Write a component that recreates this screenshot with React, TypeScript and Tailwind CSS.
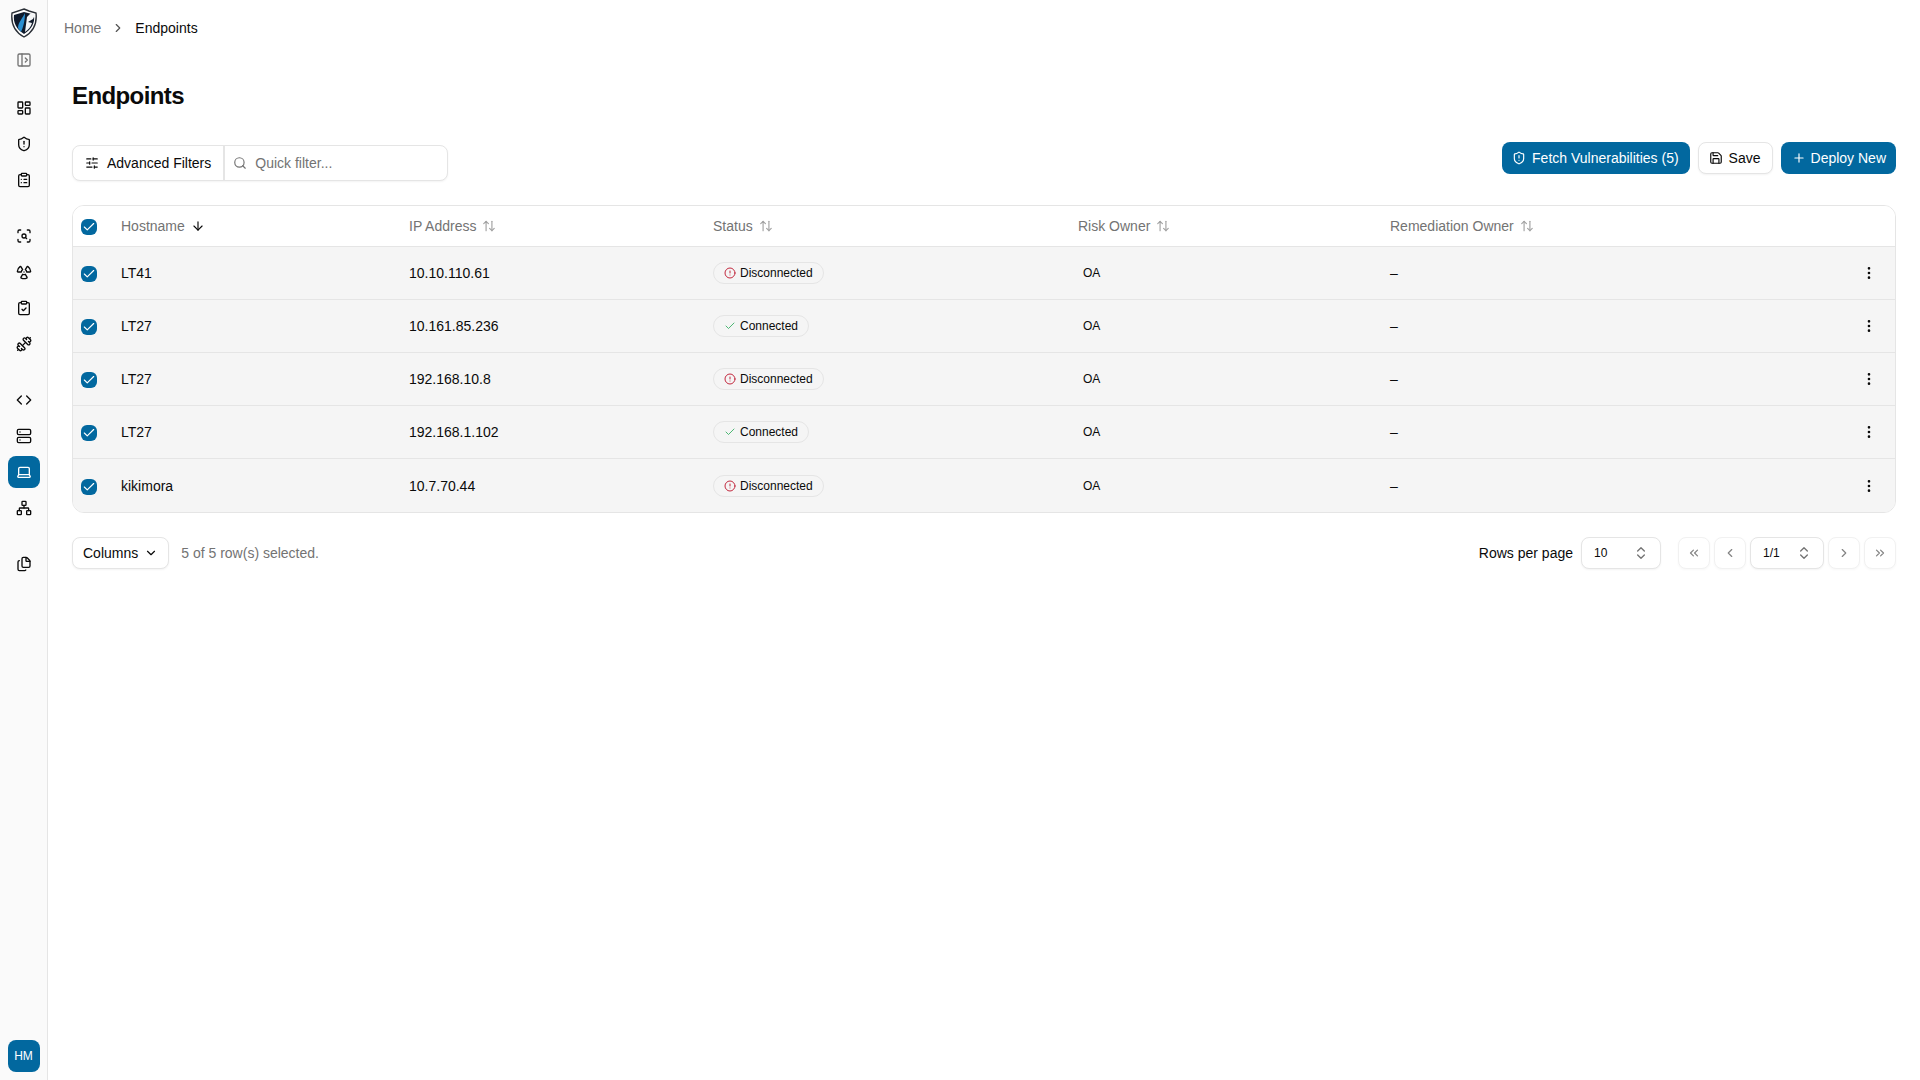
import React from "react";
import { ArrowDown, ArrowUpDown, Search, ShieldAlert, Save, Plus, EllipsisVertical, CircleAlert, Check, ChevronDown, ChevronsUpDown, ChevronsLeft, ChevronLeft, ChevronRight, ChevronsRight, Radiation, Dumbbell, Files, PanelLeftOpen, LayoutDashboard, ClipboardList, ScanSearch, ClipboardCheck, Code, Server, Laptop, Network, SlidersHorizontal } from "lucide-react";

const rows = [
  ["LT41", "10.10.110.61", false],
  ["LT27", "10.161.85.236", true],
  ["LT27", "192.168.10.8", false],
  ["LT27", "192.168.1.102", true],
  ["kikimora", "10.7.70.44", false],
] as const;

function Check16() {
  return (
    <span className="flex h-4 w-4 items-center justify-center rounded-[6px] bg-[#02689f] text-white">
      <Check size={14} strokeWidth={2} />
    </span>
  );
}

function Logo() {
  return (
    <svg width="28" height="30" viewBox="0 0 28 30">
      <path d="M14 1 L19 3 L26 5 C27 14 25 23 14 29 C3 23 1 14 2 5 Z" fill="#fff" stroke="#2a2f36" strokeWidth="1.4" />
      <path d="M14 4 L22 6 L24 8 C25 14 22 21 14 26 C6 21 3 14 4 7 Z" fill="#0f1a2b" />
      <path d="M15 5 C13 10 8 14 8 20 L11 24 C13 20 15 13 15 5 Z" fill="#2b8fd0" />
      <path d="M17 9 L21 5 L25 7 L23 11 L18 14 L22 15 C21 19 18 22 15 24 L17 9 Z" fill="#f4f5f6" />
    </svg>
  );
}

function NavIcon({ children, active }: { children: React.ReactNode; active?: boolean }) {
  return (
    <div className={`flex h-8 w-8 items-center justify-center rounded-lg ${active ? "bg-[#02689f] text-white" : "text-[#0a0a0a]"}`}>
      {children}
    </div>
  );
}

function HeadCell({ label, className, sorted }: { label: string; className: string; sorted?: boolean }) {
  return (
    <div className={`flex items-center gap-[6px] text-sm text-[#737373] ${className}`}>
      {label}
      {sorted ? <ArrowDown size={14} className="text-[#0a0a0a]" /> : <ArrowUpDown size={14} className="text-[#a3a3a3]" />}
    </div>
  );
}

export default function App() {
  return (
    <div className="flex min-h-[1080px] bg-white font-['Liberation_Sans',Arial,sans-serif] text-[#0a0a0a]">
      <aside className="flex h-[1080px] w-12 shrink-0 flex-col items-center border-r border-[#e5e5e5] bg-[#fafafa]">
        <div className="mt-2 flex h-[30px] w-8 items-center justify-center"><Logo /></div>
        <div className="mt-[6px]"><div className="flex h-8 w-8 items-center justify-center text-[#737373]"><PanelLeftOpen size={16} /></div></div>
        <div className="mt-[16px] flex flex-col gap-[4px]">
          <NavIcon><LayoutDashboard size={16} /></NavIcon>
          <NavIcon><ShieldAlert size={16} /></NavIcon>
          <NavIcon><ClipboardList size={16} /></NavIcon>
        </div>
        <div className="mt-[24px] flex flex-col gap-[4px]">
          <NavIcon><ScanSearch size={16} /></NavIcon>
          <NavIcon><Radiation size={16} /></NavIcon>
          <NavIcon><ClipboardCheck size={16} /></NavIcon>
          <NavIcon><Dumbbell size={16} /></NavIcon>
        </div>
        <div className="mt-[24px] flex flex-col gap-[4px]">
          <NavIcon><Code size={16} /></NavIcon>
          <NavIcon><Server size={16} /></NavIcon>
          <NavIcon active><Laptop size={16} /></NavIcon>
          <NavIcon><Network size={16} /></NavIcon>
        </div>
        <div className="mt-[24px]"><NavIcon><Files size={16} /></NavIcon></div>
        <div className="mt-auto mb-2 flex h-8 w-8 items-center justify-center rounded-lg bg-[#02689f] text-xs text-white">HM</div>
      </aside>

      <main className="flex-1 px-6">
        <nav className="-ml-2 flex h-14 items-center text-sm">
          <span className="text-[#737373]">Home</span>
          <ChevronRight size={14} className="mx-[10px] text-[#525252]" />
          <span>Endpoints</span>
        </nav>

        <h1 className="mt-[24px] text-2xl leading-8 font-bold tracking-tight">Endpoints</h1>

        <div className="mt-[21px] flex h-[48px] items-start justify-between">
          <div className="mt-[12px] flex h-9 w-[376px] rounded-lg border border-[#e5e5e5] bg-white shadow-xs">
            <div className="flex items-center gap-2 border-r-2 border-[#e5e5e5] px-[12px] text-sm">
              <SlidersHorizontal size={14} />
              Advanced Filters
            </div>
            <div className="flex items-center gap-2 pl-[8px] text-sm text-[#737373]">
              <Search size={14} />
              Quick filter...
            </div>
          </div>
          <div className="mt-[9px] flex gap-2">
            <div className="flex h-8 items-center gap-[6px] rounded-lg bg-[#02689f] pr-[11px] pl-[10px] text-sm text-white">
              <ShieldAlert size={14} />
              Fetch Vulnerabilities (5)
            </div>
            <div className="flex h-8 items-center gap-[6px] rounded-lg border border-[#e5e5e5] bg-white pr-[11px] pl-[10px] text-sm shadow-xs">
              <Save size={14} />
              Save
            </div>
            <div className="flex h-8 items-center gap-[5px] rounded-lg bg-[#02689f] pr-[10px] pl-[11px] text-sm text-white">
              <Plus size={14} />
              Deploy New
            </div>
          </div>
        </div>

        <div className="mt-[24px] overflow-hidden rounded-xl border border-[#e5e5e5]">
          <div className="flex h-[41px] items-center border-b border-[#e5e5e5] bg-white">
            <div className="w-12 pt-[2px] pl-2"><Check16 /></div>
            <HeadCell label="Hostname" sorted className="w-[288px]" />
            <HeadCell label="IP Address" className="w-[304px]" />
            <HeadCell label="Status" className="w-[365px]" />
            <HeadCell label="Risk Owner" className="w-[312px]" />
            <HeadCell label="Remediation Owner" className="flex-1" />
          </div>
          {rows.map(([host, ip, ok], i) => (
            <div key={i} className={`flex h-[53px] items-center bg-[#f5f5f5] text-sm ${i < 4 ? "border-b border-[#e5e5e5]" : ""}`}>
              <div className="w-12 pt-[2px] pl-2"><Check16 /></div>
              <div className="w-[288px]">{host}</div>
              <div className="w-[304px]">{ip}</div>
              <div className="w-[365px]">
                <span className="inline-flex h-[22px] items-center gap-[4px] rounded-full border border-[#e5e5e5] px-[10px] text-xs">
                  {ok ? <Check size={12} strokeWidth={1.5} className="text-[#16a34a]" /> : <CircleAlert size={12} className="text-[#c2273d]" />}
                  {ok ? "Connected" : "Disconnected"}
                </span>
              </div>
              <div className="w-[312px] pl-[5px] text-xs">OA</div>
              <div className="flex-1">–</div>
              <EllipsisVertical size={16} className="mr-[18px]" />
            </div>
          ))}
        </div>

        <div className="mt-[24px] flex h-8 items-center justify-between">
          <div className="flex items-center gap-3">
            <div className="flex h-8 items-center gap-[6px] rounded-lg border border-[#e5e5e5] bg-white px-[10px] text-sm shadow-xs">
              Columns
              <ChevronDown size={14} />
            </div>
            <span className="text-sm text-[#737373]">5 of 5 row(s) selected.</span>
          </div>
          <div className="flex items-center text-sm">
            <span className="mr-2">Rows per page</span>
            <div className="mr-[17px] flex h-8 w-[80px] items-center justify-between rounded-lg border border-[#e5e5e5] bg-white pr-[11px] pl-[12px] text-xs shadow-xs">
              10
              <ChevronsUpDown size={16} className="text-[#737373]" />
            </div>
            <div className="flex items-center gap-1">
              {[ChevronsLeft, ChevronLeft].map((I, k) => (
                <div key={k} className="flex h-8 w-8 items-center justify-center rounded-lg border border-[#e5e5e5] bg-white text-[#0a0a0a] opacity-50 shadow-xs"><I size={14} /></div>
              ))}
              <div className="flex h-8 w-[74px] items-center justify-between rounded-lg border border-[#e5e5e5] bg-white pr-[11px] pl-[12px] text-xs shadow-xs">
                1/1
                <ChevronsUpDown size={16} className="text-[#737373]" />
              </div>
              {[ChevronRight, ChevronsRight].map((I, k) => (
                <div key={k} className="flex h-8 w-8 items-center justify-center rounded-lg border border-[#e5e5e5] bg-white text-[#0a0a0a] opacity-50 shadow-xs"><I size={14} /></div>
              ))}
            </div>
          </div>
        </div>
      </main>
    </div>
  );
}
